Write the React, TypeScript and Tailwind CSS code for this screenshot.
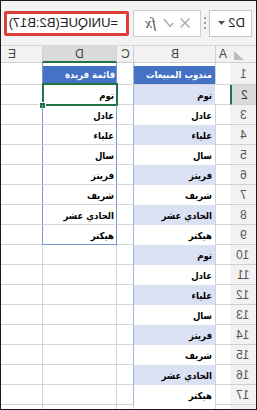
import React from "react";

const names = ["توم", "عادل", "علياء", "سال", "فريتز", "شريف", "الحادي عشر", "هيكتر"];

const arabic =
  "font-['DejaVu_Sans_Condensed','DejaVu_Sans',sans-serif] font-bold text-[9.5px] leading-none text-black whitespace-nowrap";
const latin = "font-['Liberation_Sans',Arial,sans-serif]";

function Mir({ children, className = "" }: { children: React.ReactNode; className?: string }) {
  return <span className={`inline-block -scale-x-100 ${className}`}>{children}</span>;
}

function TopBar() {
  return (
    <div className="h-[45px] bg-[#f3f3f3] flex items-center border-b border-[#d6d6d6]">
      {/* name box */}
      <div className="mr-[4px] w-[43px] h-[27px] shrink-0 bg-white border border-[#c8c8c8]">
        <div dir="ltr" className="-scale-x-100 h-full flex items-center justify-between pl-[6px] pr-[8px]">
          <span className={`${latin} text-[13px] text-[#222]`}>D2</span>
          <svg width="7" height="4" viewBox="0 0 7 4">
            <polygon points="0,0 7,0 3.5,4" fill="#555" />
          </svg>
        </div>
      </div>
      {/* dots */}
      <div className="w-[8px] shrink-0 flex flex-col items-center gap-[3px]">
        <span className="w-[2px] h-[2px] bg-[#a0a0a0]" />
        <span className="w-[2px] h-[2px] bg-[#a0a0a0]" />
        <span className="w-[2px] h-[2px] bg-[#a0a0a0]" />
      </div>
      {/* fx box */}
      <div className="w-[68px] h-[27px] shrink-0 bg-white border border-[#cfcfcf]">
        <div dir="ltr" className="-scale-x-100 h-full flex items-center pl-[9px]">
          <svg width="12" height="12" viewBox="0 0 12 12" className="shrink-0">
            <path d="M1.5 1.5 L10.5 10.5 M10.5 1.5 L1.5 10.5" stroke="#a8a8a8" strokeWidth="1.4" fill="none" />
          </svg>
          <svg width="11" height="10" viewBox="0 0 11 10" className="shrink-0 ml-[5px]">
            <path d="M1 5 L4 8.5 L10 1" stroke="#a8a8a8" strokeWidth="1.4" fill="none" />
          </svg>
          <span className="ml-[7px] font-['Liberation_Serif',serif] italic text-[15px] leading-none text-[#555]">fx</span>
        </div>
      </div>
      {/* formula box */}
      <div className="mr-[4px] w-[125px] h-[25px] shrink-0 bg-white border-[3px] border-[#dc3f38] rounded-[2px]">
        <div dir="ltr" className="-scale-x-100 h-full flex items-center pl-[8px]">
          <span className={`${latin} text-[13px] text-[#222] whitespace-nowrap`}>=UNIQUE(B2:B17)</span>
        </div>
      </div>
    </div>
  );
}

function HeaderRow() {
  const hdr = `${latin} text-[12px] text-[#444]`;
  return (
    <div className="flex h-[17px] bg-[#f2f2f2]">
      <div className="w-[26px] shrink-0 border-b border-[#d0d0d0] flex items-end pb-[2px] justify-end pl-[4px]">
        <svg width="10" height="9" viewBox="0 0 10 9">
          <polygon points="0,0 0,9 10,9" fill="#bdbdbd" />
        </svg>
      </div>
      <div className="w-[15px] shrink-0 border-b border-l border-[#d0d0d0] flex items-center justify-center">
        <Mir className={hdr}>A</Mir>
      </div>
      <div className="w-[82px] shrink-0 border-b border-l border-[#d0d0d0] flex items-center justify-center">
        <Mir className={hdr}>B</Mir>
      </div>
      <div className="w-[16px] shrink-0 border-b border-[#d0d0d0] flex items-center justify-center">
        <Mir className={hdr}>C</Mir>
      </div>
      <div className="w-[75px] shrink-0 border-b-2 border-l border-r border-l-[#d0d0d0] border-r-[#d0d0d0] border-b-[#217346] bg-[#dadada] flex items-center justify-center">
        <Mir className={hdr}>D</Mir>
      </div>
      <div className="w-[41px] shrink-0 border-b border-[#d0d0d0] flex items-center justify-end pl-[7px]">
        <Mir className={hdr}>E</Mir>
      </div>
    </div>
  );
}

function Row1() {
  return (
    <div className="flex h-[22px]">
      <div className="w-[26px] shrink-0 bg-[#f2f2f2] border-b border-[#d0d0d0] flex items-center justify-center">
        <Mir className={`${latin} text-[12px] text-[#555]`}>1</Mir>
      </div>
      <div className="w-[15px] shrink-0 border-b border-l border-[#d4d4d4]" />
      <div className="w-[82px] shrink-0 border-b border-l border-b-[#d4d4d4] border-l-[#9fb4de] pt-[3px]">
        <div className="h-full bg-[#4472c4] flex items-center justify-start pr-[3px]">
          <span className={`${arabic} !text-white`}>مندوب المبيعات</span>
        </div>
      </div>
      <div className="w-[16px] shrink-0 border-b border-[#d4d4d4]" />
      <div className="w-[75px] shrink-0 border-b border-l border-r border-b-[#d4d4d4] border-l-[#7b98d4] border-r-[#7b98d4] pt-[3px]">
        <div className="h-full bg-[#4472c4] flex items-center justify-start pr-[1px]">
          <span className={`${arabic} !text-white`}>قائمة فريدة</span>
        </div>
      </div>
      <div className="w-[41px] shrink-0 border-b border-[#d4d4d4]" />
    </div>
  );
}

function Row({ n }: { n: number }) {
  const b = n >= 2 && n <= 17 ? names[(n - 2) % 8] : "";
  const d = n >= 2 && n <= 9 ? names[n - 2] : "";
  const band = n >= 2 && n <= 17 && n % 2 === 0;
  const inB = n >= 2 && n <= 17;
  const inD = n >= 2 && n <= 9;
  const selected = n === 2;
  return (
    <div className="flex h-[20px]">
      <div
        className={`w-[26px] shrink-0 border-b border-b-[#d0d0d0] flex items-center justify-center ${
          selected ? "bg-[#dadada] border-l-2 border-l-[#217346]" : "bg-[#f2f2f2]"
        }`}
      >
        {n <= 17 && (
          <Mir className={`${latin} text-[12px] ${selected ? "text-[#333]" : "text-[#555]"}`}>{n}</Mir>
        )}
      </div>
      <div className={`w-[15px] shrink-0 border-b border-[#d4d4d4] ${selected ? "" : "border-l"}`} />
      <div
        className={`w-[82px] shrink-0 border-l flex items-center justify-start pr-[3px] pt-[2px] ${
          inB ? "border-l-[#9fb4de]" : "border-l-[#d4d4d4] border-b border-b-[#d4d4d4]"
        } ${band ? "bg-[#d9e1f2]" : "bg-white"}`}
      >
        {b && <span className={arabic}>{b}</span>}
      </div>
      <div className="w-[16px] shrink-0 border-b border-[#d4d4d4]" />
      <div
        className={`relative w-[75px] shrink-0 border-l border-r flex items-center justify-start pr-[2px] pt-[2px] ${
          inD ? "border-l-[#7b98d4] border-r-[#7b98d4]" : "border-l-[#d4d4d4] border-r-[#d4d4d4]"
        } border-b ${n === 9 ? "border-b-[#7b98d4]" : "border-b-[#d4d4d4]"}`}
      >
        {d && <span className={arabic}>{d}</span>}
        {selected && (
          <div className="absolute -top-[2px] -bottom-[2px] -left-[1px] -right-[2px] border-2 border-[#217346]">
            <div className="absolute -left-[4px] -bottom-[4px] w-[5px] h-[5px] bg-[#217346] outline outline-1 outline-white" />
          </div>
        )}
      </div>
      <div className="w-[41px] shrink-0 border-b border-[#d4d4d4]" />
    </div>
  );
}

export default function App() {
  const rows = Array.from({ length: 17 }, (_, i) => i + 2);
  return (
    <div dir="rtl" className="w-[257px] h-[410px] overflow-hidden border border-[#1a1a1a] bg-white">
      <TopBar />
      <HeaderRow />
      <Row1 />
      {rows.map((n) => (
        <Row key={n} n={n} />
      ))}
    </div>
  );
}
